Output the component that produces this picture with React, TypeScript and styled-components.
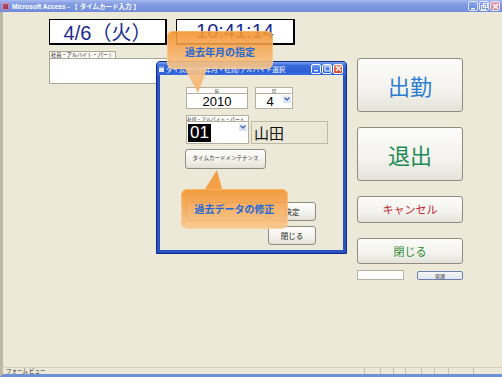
import styled, { createGlobalStyle } from "styled-components";

const CJK = `"Noto Sans CJK JP", sans-serif`;
const LATIN = `"Liberation Sans", "Noto Sans CJK JP", sans-serif`;

const GlobalStyle = createGlobalStyle`
  * { box-sizing: border-box; }
  html, body { margin: 0; padding: 0; background: #ece9d8; }
  body { font-family: ${CJK}; }
`;

const statusPanes = [16, 13, 12, 16, 13, 14, 25, 29];

const Chevron = () => (
  <svg width="6" height="4" viewBox="0 0 6 4">
    <path d="M0.5 0.5 L3 3 L5.5 0.5" fill="none" stroke="#3f63c0" strokeWidth="1.3" />
  </svg>
);

const Glyph = ({ kind }: { kind: "min" | "max" | "restore" | "close" }) => (
  <svg width="7" height="7" viewBox="0 0 7 7">
    {kind === "min" && <rect x="1" y="5" width="4" height="1.4" fill="#fff" />}
    {kind === "max" && <rect x="1" y="1" width="5" height="5" fill="none" stroke="#fff" strokeWidth="1" />}
    {kind === "restore" && (
      <>
        <rect x="2.5" y="0.5" width="4" height="4" fill="none" stroke="#fff" strokeWidth="0.9" />
        <rect x="0.5" y="2.5" width="4" height="4" fill="none" stroke="#fff" strokeWidth="0.9" />
      </>
    )}
    {kind === "close" && <path d="M1 1 L6 6 M6 1 L1 6" stroke="#fff" strokeWidth="1.3" />}
  </svg>
);

const App = () => {
  return (
    <>
      <GlobalStyle />
      <Window>
        <TitleBar>
          <AppIcon />
          <TitleText>Microsoft Access - 【 タイムカード入力 】</TitleText>
          <WinControls>
            <WinBtn $tone="blue" $faded>
              <Glyph kind="min" />
            </WinBtn>
            <WinBtn $tone="blue" $faded>
              <Glyph kind="restore" />
            </WinBtn>
            <WinBtn $tone="red" $faded>
              <Glyph kind="close" />
            </WinBtn>
          </WinControls>
        </TitleBar>

        <Client>
          <LeftColumn>
            <ClockRow>
              <ClockBox $w={118}>4/6（火）</ClockBox>
              <ClockBox $w={119}>10:41:14</ClockBox>
            </ClockRow>
            <Caption>社員・アルバイト・パート</Caption>
            <MemberBox />
          </LeftColumn>

          <ActionColumn>
            <ActionStack>
              <ActionButton $h={54} $color="#2a7ed1" $size={22}>
                出勤
              </ActionButton>
              <ActionButton $h={54} $color="#1d8a52" $size={22}>
                退出
              </ActionButton>
              <ActionButton $h={27} $color="#c2262e" $size={11}>
                キャンセル
              </ActionButton>
              <ActionButton $h={26} $color="#2b8a2e" $size={11}>
                閉じる
              </ActionButton>
            </ActionStack>
            <FooterRow>
              <SmallInput />
              <AdminButton>管理</AdminButton>
            </FooterRow>
          </ActionColumn>
        </Client>

        <StatusBar>
          <StatusText>フォーム ビュー</StatusText>
          {statusPanes.map((w, i) => (
            <StatusPane key={i} style={{ width: w }} />
          ))}
        </StatusBar>

        <Dialog>
          <DialogTitle>
            <DialogIcon />
            <DialogTitleText>タイムカード年月・社員/アルバイト選択</DialogTitleText>
            <WinControls>
              <WinBtn $tone="blue">
                <Glyph kind="min" />
              </WinBtn>
              <WinBtn $tone="blue">
                <Glyph kind="max" />
              </WinBtn>
              <WinBtn $tone="red">
                <Glyph kind="close" />
              </WinBtn>
            </WinControls>
          </DialogTitle>
          <DialogBody>
            <FieldRow>
              <Field $w={62}>
                <FieldLabel $center>年</FieldLabel>
                <TextInput>2010</TextInput>
              </Field>
              <Field $w={38}>
                <FieldLabel $center>月</FieldLabel>
                <Combo $h={16}>
                  <ComboValue $center>4</ComboValue>
                  <DropButton>
                    <Chevron />
                  </DropButton>
                </Combo>
              </Field>
            </FieldRow>

            <EmployeeRow>
              <Field $w={63}>
                <FieldLabel>社員・アルバイト・パート</FieldLabel>
                <Combo $h={23}>
                  <ComboValue>
                    <Selected>01</Selected>
                  </ComboValue>
                  <DropButton>
                    <Chevron />
                  </DropButton>
                </Combo>
              </Field>
              <NameBox>山田</NameBox>
            </EmployeeRow>

            <MaintButton>タイムカードメンテナンス</MaintButton>

            <ButtonGrid>
              <DialogButton />
              <DialogButton>決定</DialogButton>
              <DialogButton $col={2}>閉じる</DialogButton>
            </ButtonGrid>
          </DialogBody>
        </Dialog>

        <Callout $x={167} $y={31} $w={106} $h={38} $pad={4}>
          過去年月の指定
          <TailDown width="22" height="24" viewBox="0 0 22 24">
            <defs>
              <linearGradient id="tailA" x1="0" y1="0" x2="0" y2="1">
                <stop offset="0" stopColor="#f9c387" />
                <stop offset="1" stopColor="#f7b06a" />
              </linearGradient>
            </defs>
            <polygon points="0,0 22,0 13,24" fill="url(#tailA)" />
          </TailDown>
        </Callout>

        <Callout $x={181} $y={189} $w={107} $h={40} $pad={0}>
          過去データの修正
          <TailUp width="17" height="19" viewBox="0 0 17 19">
            <polygon points="0,19 17,19 12,0" fill="#f4993a" />
          </TailUp>
        </Callout>
      </Window>
    </>
  );
};

const Window = styled.div`
  position: relative;
  width: 502px;
  height: 377px;
  display: flex;
  flex-direction: column;
  background: #ece9d8;
  overflow: hidden;
`;

const TitleBar = styled.div`
  height: 12px;
  display: flex;
  align-items: center;
  gap: 3px;
  padding: 0 2px;
  background: linear-gradient(#a7b9ee, #819ae3 35%, #7892df 80%, #6f8ad8);
`;

const AppIcon = styled.span`
  width: 7px;
  height: 7px;
  border-radius: 1px;
  background: linear-gradient(135deg, #c45479, #8b2f55);
  box-shadow: inset 0 0 0 1px rgba(255, 255, 255, 0.4);
`;

const TitleText = styled.span`
  flex: 1;
  color: #fff;
  font: bold 6.5px ${LATIN};
  white-space: nowrap;
`;

const WinControls = styled.div`
  display: flex;
  gap: 1px;
`;

const WinBtn = styled.span<{ $tone: "blue" | "red"; $faded?: boolean }>`
  width: 10px;
  height: 10px;
  display: flex;
  align-items: center;
  justify-content: center;
  border: 1px solid ${(p) => (p.$faded ? "#dfe6fa" : "#fff")};
  border-radius: 2px;
  background: ${(p) =>
    p.$tone === "red"
      ? p.$faded
        ? "linear-gradient(#e6a4b0, #cf7f93)"
        : "linear-gradient(#f08a6a, #d8452a)"
      : p.$faded
      ? "linear-gradient(#8eaaf0, #5f82e0)"
      : "linear-gradient(#6d9af3, #2b5fdd)"};
`;

const Client = styled.div`
  flex: 1;
  display: grid;
  grid-template-columns: 246px 106px;
  column-gap: 62px;
  align-items: start;
  padding-left: 46px;
  border-left: 3px solid #bcb8a5;
`;

const LeftColumn = styled.div`
  padding-top: 7px;
  display: flex;
  flex-direction: column;
  align-items: flex-start;
`;

const ClockRow = styled.div`
  display: flex;
  gap: 9px;
`;

const ClockBox = styled.div<{ $w: number }>`
  width: ${(p) => p.$w}px;
  height: 26px;
  display: flex;
  align-items: center;
  justify-content: center;
  background: #fff;
  border: 1px solid #000;
  border-right-width: 2px;
  border-bottom-width: 2px;
  color: #1c2a92;
  font: 20px ${LATIN};
`;

const Caption = styled.div`
  margin-top: 6px;
  height: 7px;
  padding: 0 2px 0 1px;
  border: 1px solid #a9a593;
  border-bottom: 0;
  background: #fbfaf5;
  color: #222;
  font: 5.2px/6px ${CJK};
  white-space: nowrap;
`;

const MemberBox = styled.div`
  width: 120px;
  height: 26px;
  background: #fff;
  border: 1px solid #aaa796;
`;

const ActionColumn = styled.div`
  padding-top: 46px;
  display: flex;
  flex-direction: column;
`;

const ActionStack = styled.div`
  display: flex;
  flex-direction: column;
  gap: 15px;
`;

const ActionButton = styled.button<{ $h: number; $color: string; $size: number }>`
  width: 106px;
  height: ${(p) => p.$h}px;
  padding: 0;
  display: flex;
  align-items: center;
  justify-content: center;
  border: 1px solid #8e8c81;
  border-radius: 3px;
  background: linear-gradient(#fcfcfa, #f3f2ee 60%, #e4e2d9);
  color: ${(p) => p.$color};
  font: ${(p) => p.$size}px/1 ${CJK};
`;

const FooterRow = styled.div`
  margin-top: 6px;
  display: flex;
  align-items: center;
  gap: 13px;
`;

const SmallInput = styled.div`
  width: 47px;
  height: 10px;
  background: #fff;
  border: 1px solid #b5b2a3;
`;

const AdminButton = styled.button`
  width: 46px;
  height: 9px;
  padding: 0;
  border: 1px solid #6a7fae;
  border-radius: 2px;
  background: linear-gradient(#f6f7f9, #e2e5ec);
  color: #333;
  font: 5px/1 ${CJK};
`;

const StatusBar = styled.div`
  height: 10px;
  display: flex;
  border-top: 1px solid #d4d0bc;
  border-left: 3px solid #bcb8a5;
  border-bottom: 3px solid #6f8fd9;
`;

const StatusText = styled.div`
  flex: 1;
  padding-left: 3px;
  color: #333;
  font: 5.5px/6px ${CJK};
`;

const StatusPane = styled.div`
  border-left: 1px solid #c8c4b0;
`;

const Dialog = styled.div`
  position: absolute;
  left: 156px;
  top: 61px;
  width: 191px;
  height: 193px;
  display: flex;
  flex-direction: column;
  padding: 0 3px 3px;
  border: 1px solid #0d2a86;
  border-radius: 4px 4px 0 0;
  background: #2a52c3;
`;

const DialogTitle = styled.div`
  height: 13px;
  margin: 0 -3px;
  padding: 0 3px 0 2px;
  display: flex;
  align-items: center;
  gap: 2px;
  border-radius: 3px 3px 0 0;
  background: linear-gradient(#80a5f1, #3b6cdc 25%, #2c5dd4 70%, #3a6ddf);
`;

const DialogIcon = styled.span`
  width: 5px;
  height: 6px;
  background: #dfe6f7;
  border-top: 2px solid #7fa0e6;
`;

const DialogTitleText = styled.span`
  flex: 1;
  padding-top: 2px;
  color: #fff;
  font: 6.5px/1 ${CJK};
  white-space: nowrap;
`;

const DialogBody = styled.div`
  flex: 1;
  padding: 12px 0 0 26px;
  display: flex;
  flex-direction: column;
  align-items: flex-start;
  background: #ece9d8;
`;

const FieldRow = styled.div`
  display: flex;
  gap: 7px;
`;

const EmployeeRow = styled.div`
  margin-top: 6px;
  display: flex;
  align-items: flex-end;
  gap: 2px;
`;

const Field = styled.div<{ $w: number }>`
  width: ${(p) => p.$w}px;
  display: flex;
  flex-direction: column;
`;

const FieldLabel = styled.div<{ $center?: boolean }>`
  height: 6px;
  border: 1px solid #b4b09d;
  border-bottom: 0;
  background: #fdfdfb;
  color: #222;
  font: 4.8px/5px ${CJK};
  text-align: ${(p) => (p.$center ? "center" : "left")};
  white-space: nowrap;
`;

const TextInput = styled.div`
  height: 16px;
  display: flex;
  align-items: center;
  justify-content: center;
  background: #fff;
  border: 1px solid #b4b09d;
  color: #000;
  font: 13px ${LATIN};
`;

const Combo = styled.div<{ $h: number }>`
  height: ${(p) => p.$h}px;
  display: flex;
  align-items: flex-start;
  padding: 1px;
  background: #fff;
  border: 1px solid #b4b09d;
`;

const ComboValue = styled.div<{ $center?: boolean }>`
  flex: 1;
  align-self: stretch;
  display: flex;
  align-items: center;
  justify-content: ${(p) => (p.$center ? "center" : "flex-start")};
  color: #000;
  font: 13px/1 ${LATIN};
`;

const Selected = styled.span`
  padding: 0 2px;
  background: #000;
  color: #fff;
  font: 17px/18px ${LATIN};
`;

const DropButton = styled.span`
  width: 8px;
  height: 8px;
  display: flex;
  align-items: center;
  justify-content: center;
  border-radius: 1px;
  background: linear-gradient(#f1f4fb, #d7e0f4);
`;

const NameBox = styled.div`
  width: 77px;
  height: 23px;
  display: flex;
  align-items: center;
  padding-left: 2px;
  border: 1px solid #bdb9a6;
  background: #ebe8d8;
  color: #111;
  font: 15px/1 ${CJK};
`;

const MaintButton = styled.button`
  margin-top: 5px;
  margin-left: -1px;
  width: 81px;
  height: 20px;
  padding: 0;
  border: 1px solid #8e8c81;
  border-radius: 3px;
  background: linear-gradient(#fdfdfb, #f2f1eb 60%, #e2e0d6);
  color: #333;
  font: 5.5px/1 ${CJK};
  white-space: nowrap;
`;

const ButtonGrid = styled.div`
  margin-top: 33px;
  display: grid;
  grid-template-columns: 80px 48px;
  grid-auto-rows: 19px;
  column-gap: 2px;
  row-gap: 5px;
`;

const DialogButton = styled.button<{ $col?: number }>`
  grid-column: ${(p) => p.$col ?? "auto"};
  padding: 0;
  border: 1px solid #8e8c81;
  border-radius: 3px;
  background: linear-gradient(#fdfdfb, #f2f1eb 60%, #e2e0d6);
  color: #222;
  font: 7.5px/1 ${CJK};
`;

const Callout = styled.div<{ $x: number; $y: number; $w: number; $h: number; $pad: number }>`
  position: absolute;
  left: ${(p) => p.$x}px;
  top: ${(p) => p.$y}px;
  width: ${(p) => p.$w}px;
  height: ${(p) => p.$h}px;
  padding-top: ${(p) => p.$pad}px;
  display: flex;
  align-items: center;
  justify-content: center;
  border-radius: 6px;
  background: linear-gradient(rgba(243, 146, 42, 0.9), rgba(246, 170, 90, 0.88) 50%, rgba(250, 200, 140, 0.9));
  box-shadow: inset 0 0 0 1px rgba(255, 230, 190, 0.35);
  color: #2369d6;
  font: bold 10px/1 ${CJK};
  white-space: nowrap;
`;

const TailDown = styled.svg`
  position: absolute;
  left: 18px;
  top: 100%;
  opacity: 0.92;
`;

const TailUp = styled.svg`
  position: absolute;
  left: 24px;
  bottom: 100%;
  opacity: 0.92;
`;

export default App;
